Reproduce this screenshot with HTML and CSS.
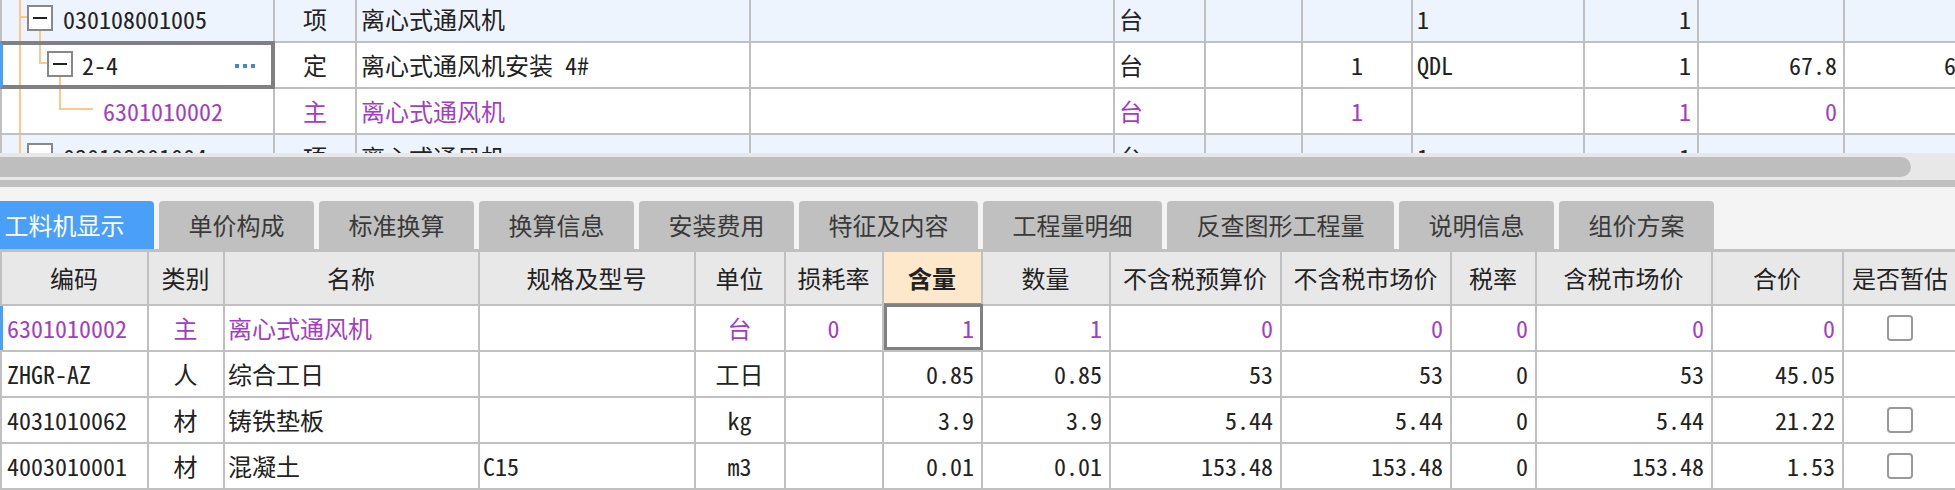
FILE: index.html
```html
<!DOCTYPE html>
<html lang="zh-CN">
<head>
<meta charset="utf-8">
<title>工料机显示</title>
<link rel="stylesheet" href="styles.css">
</head>
<body>
<div class="app">
  <section class="top-pane">
    <div class="top-view">
      <div class="tgrid">
        <div class="trow alt">
          <div class="c tree">
            <svg class="tw1" width="61" height="44" viewBox="0 0 61 44">
              <rect x="17" y="0" width="2" height="44" fill="#fcc98a"/>
              <rect x="19" y="19" width="6" height="2" fill="#fcc98a"/>
              <rect x="37" y="34" width="2" height="10" fill="#fcc98a"/>
              <rect x="26" y="9" width="24" height="24" fill="#fff" stroke="#888" stroke-width="2"/>
              <rect x="31" y="20" width="14" height="2" fill="#222"/>
            </svg>
            <span>030108001005</span>
          </div>
          <div class="c m">项</div>
          <div class="c">离心式通风机</div>
          <div class="c"></div>
          <div class="c">台</div>
          <div class="c"></div>
          <div class="c"></div>
          <div class="c">1</div>
          <div class="c r">1</div>
          <div class="c"></div>
          <div class="c"></div>
        </div>
        <div class="trow">
          <div class="c tree sel">
            <svg class="tw2" width="80" height="44" viewBox="0 0 80 44">
              <rect x="17" y="0" width="2" height="44" fill="#fcc98a"/>
              <rect x="37" y="0" width="2" height="21" fill="#fcc98a"/>
              <rect x="37" y="19" width="8" height="2" fill="#fcc98a"/>
              <rect x="57" y="34" width="2" height="10" fill="#fcc98a"/>
              <rect x="46" y="9" width="24" height="24" fill="#fff" stroke="#888" stroke-width="2"/>
              <rect x="51" y="20" width="14" height="2" fill="#222"/>
            </svg>
            <span>2-4</span>
            <svg class="more" width="22" height="5" viewBox="0 0 22 5">
              <rect x="0" y="0" width="4" height="4" fill="#3d8ad2"/>
              <rect x="8" y="0" width="4" height="4" fill="#3d8ad2"/>
              <rect x="16" y="0" width="4" height="4" fill="#3d8ad2"/>
            </svg>
          </div>
          <div class="c m">定</div>
          <div class="c">离心式通风机安装 4#</div>
          <div class="c"></div>
          <div class="c">台</div>
          <div class="c"></div>
          <div class="c m">1</div>
          <div class="c">QDL</div>
          <div class="c r">1</div>
          <div class="c r">67.8</div>
          <div class="c r">67.8</div>
        </div>
        <div class="trow pur">
          <div class="c tree">
            <svg class="tw3" width="101" height="44" viewBox="0 0 101 44">
              <rect x="17" y="0" width="2" height="44" fill="#fcc98a"/>
              <rect x="57" y="0" width="2" height="21" fill="#fcc98a"/>
              <rect x="57" y="19" width="34" height="2" fill="#fcc98a"/>
            </svg>
            <span>6301010002</span>
          </div>
          <div class="c m">主</div>
          <div class="c">离心式通风机</div>
          <div class="c"></div>
          <div class="c">台</div>
          <div class="c"></div>
          <div class="c m">1</div>
          <div class="c"></div>
          <div class="c r">1</div>
          <div class="c r">0</div>
          <div class="c"></div>
        </div>
        <div class="trow alt">
          <div class="c tree">
            <svg class="tw1" width="61" height="44" viewBox="0 0 61 44">
              <rect x="17" y="0" width="2" height="44" fill="#fcc98a"/>
              <rect x="19" y="19" width="6" height="2" fill="#fcc98a"/>
              <rect x="26" y="9" width="24" height="24" fill="#fff" stroke="#888" stroke-width="2"/>
              <rect x="31" y="20" width="14" height="2" fill="#222"/>
            </svg>
            <span>030108001004</span>
          </div>
          <div class="c m">项</div>
          <div class="c">离心式通风机</div>
          <div class="c"></div>
          <div class="c">台</div>
          <div class="c"></div>
          <div class="c"></div>
          <div class="c">1</div>
          <div class="c r">1</div>
          <div class="c"></div>
          <div class="c"></div>
        </div>
      </div>
    </div>
    <div class="hscroll"><div class="thumb"></div></div>
  </section>
  <div class="splitter"></div>
  <section class="bottom-pane">
    <div class="tabbar">
      <div class="tabs">
        <div class="tab on">工料机显示</div>
        <div class="tab">单价构成</div>
        <div class="tab">标准换算</div>
        <div class="tab">换算信息</div>
        <div class="tab">安装费用</div>
        <div class="tab">特征及内容</div>
        <div class="tab">工程量明细</div>
        <div class="tab">反查图形工程量</div>
        <div class="tab">说明信息</div>
        <div class="tab">组价方案</div>
      </div>
    </div>
    <div class="bgrid">
      <div class="brow bhead">
        <div class="c m">编码</div>
        <div class="c m">类别</div>
        <div class="c m">名称</div>
        <div class="c m">规格及型号</div>
        <div class="c m">单位</div>
        <div class="c m">损耗率</div>
        <div class="c m hl">含量</div>
        <div class="c m">数量</div>
        <div class="c m">不含税预算价</div>
        <div class="c m">不含税市场价</div>
        <div class="c m">税率</div>
        <div class="c m">含税市场价</div>
        <div class="c m">合价</div>
        <div class="c m last">是否暂估</div>
      </div>
      <div class="brow pur cur">
        <div class="c code">6301010002</div>
        <div class="c m">主</div>
        <div class="c">离心式通风机</div>
        <div class="c"></div>
        <div class="c m">台</div>
        <div class="c m">0</div>
        <div class="c r focus">1</div>
        <div class="c r">1</div>
        <div class="c r">0</div>
        <div class="c r">0</div>
        <div class="c r">0</div>
        <div class="c r">0</div>
        <div class="c r">0</div>
        <div class="c m last"><span class="chk"></span></div>
      </div>
      <div class="brow">
        <div class="c code">ZHGR-AZ</div>
        <div class="c m">人</div>
        <div class="c">综合工日</div>
        <div class="c"></div>
        <div class="c m">工日</div>
        <div class="c"></div>
        <div class="c r">0.85</div>
        <div class="c r">0.85</div>
        <div class="c r">53</div>
        <div class="c r">53</div>
        <div class="c r">0</div>
        <div class="c r">53</div>
        <div class="c r">45.05</div>
        <div class="c m last"></div>
      </div>
      <div class="brow">
        <div class="c code">4031010062</div>
        <div class="c m">材</div>
        <div class="c">铸铁垫板</div>
        <div class="c"></div>
        <div class="c m">kg</div>
        <div class="c"></div>
        <div class="c r">3.9</div>
        <div class="c r">3.9</div>
        <div class="c r">5.44</div>
        <div class="c r">5.44</div>
        <div class="c r">0</div>
        <div class="c r">5.44</div>
        <div class="c r">21.22</div>
        <div class="c m last"><span class="chk"></span></div>
      </div>
      <div class="brow">
        <div class="c code">4003010001</div>
        <div class="c m">材</div>
        <div class="c">混凝土</div>
        <div class="c">C15</div>
        <div class="c m">m3</div>
        <div class="c"></div>
        <div class="c r">0.01</div>
        <div class="c r">0.01</div>
        <div class="c r">153.48</div>
        <div class="c r">153.48</div>
        <div class="c r">0</div>
        <div class="c r">153.48</div>
        <div class="c r">1.53</div>
        <div class="c m last"><span class="chk"></span></div>
      </div>
    </div>
  </section>
</div>
</body>
</html>
```

FILE: styles.css
```css
* {
  box-sizing: border-box;
  margin: 0;
  padding: 0;
}

html,
body {
  width: 1955px;
  height: 490px;
  overflow: hidden;
  background: #fff;
}

body {
  font-family: "Noto Sans Mono CJK SC", "Noto Sans CJK SC", "DejaVu Sans Mono", monospace;
  font-size: 24px;
  color: #222;
}

.app {
  width: 1955px;
  height: 490px;
  overflow: hidden;
}

/* ---------- top tree grid ---------- */
.top-view {
  height: 153px;
  overflow: hidden;
}

.tgrid {
  margin-top: -3px;
  width: 2000px;
  border-left: 2px solid #c0c0c0;
}

.trow {
  display: grid;
  grid-template-columns: 273px 82px 394px 364px 91px 97px 110px 172px 114px 146px 155px;
  height: 46px;
}

.trow.alt {
  background: #edf4fe;
}

.c {
  display: flex;
  align-items: center;
  padding: 0 4px;
  border-right: 2px solid #c0c0c0;
  border-bottom: 2px solid #c0c0c0;
  white-space: nowrap;
  line-height: 1;
  min-width: 0;
}

.c.m {
  justify-content: center;
}

.c.r {
  justify-content: flex-end;
  padding-right: 6px;
}

.pur {
  color: #a23fbf;
}

.tree {
  padding: 0;
}

.tree svg {
  flex: none;
  display: block;
}

.tree .more {
  margin-left: auto;
  margin-right: 16px;
  margin-top: 2px;
}

.sel {
  position: relative;
}

.sel::after {
  content: "";
  position: absolute;
  left: -2px;
  top: -2px;
  right: -2px;
  bottom: -2px;
  border: 4px solid #808080;
  border-left: 3px solid #4a9ff9;
}

/* ---------- scrollbar / splitter ---------- */
.hscroll {
  height: 27px;
  padding-top: 4px;
  background: #e8e8e8;
}

.thumb {
  width: 1911px;
  height: 20px;
  background: #bebebe;
  border-radius: 0 10px 10px 0;
}

.splitter {
  height: 7px;
  background: #c0c0c0;
}

/* ---------- tabs ---------- */
.tabbar {
  height: 62px;
  padding-top: 14px;
  background: #f4f4f4;
  overflow: hidden;
}

.tabs {
  display: flex;
  gap: 5px;
  margin-left: -25px;
}

.tab {
  flex: none;
  height: 48px;
  padding: 0 29.5px;
  background: #c0c0c0;
  border-radius: 4px 4px 0 0;
  font-family: "Noto Sans CJK SC", "Noto Sans", sans-serif;
  font-size: 24px;
  line-height: 48px;
  color: #3a3a3a;
  white-space: nowrap;
}

.tab.on {
  background: #4a9ff9;
  color: #fff;
}

/* ---------- bottom grid ---------- */
.bgrid {
  width: 1955px;
  border-left: 2px solid #c0c0c0;
  border-top: 3px solid #c0c0c0;
}

.brow {
  display: grid;
  grid-template-columns: 147px 76px 255px 216px 90px 98px 99px 128px 171px 170px 85px 176px 131px 113px;
  height: 46px;
}

.brow .c {
  padding-left: 3px;
}

.brow .c.r {
  padding-right: 7px;
}

.brow .c.code {
  padding-left: 5px;
}

.brow .c.last {
  border-right: 0;
}

.bhead {
  height: 54px;
  background: #e8e8e8;
}

.bhead .hl {
  background: #fde8cb;
  font-weight: bold;
  border-bottom-color: #4a9ff9;
  box-shadow: inset 0 -1px 0 #4a9ff9;
}

.cur .code {
  position: relative;
}

.cur .code::before {
  content: "";
  position: absolute;
  left: -2px;
  top: 0;
  bottom: 0;
  width: 3px;
  background: #4a9ff9;
}

.focus {
  position: relative;
}

.focus::after {
  content: "";
  position: absolute;
  left: 0;
  right: -2px;
  top: -2px;
  bottom: 0;
  border: 3px solid #808080;
}

.chk {
  display: block;
  width: 26px;
  height: 26px;
  border: 2px solid #9a9a9a;
  border-radius: 4px;
  background: #fff;
}
```
